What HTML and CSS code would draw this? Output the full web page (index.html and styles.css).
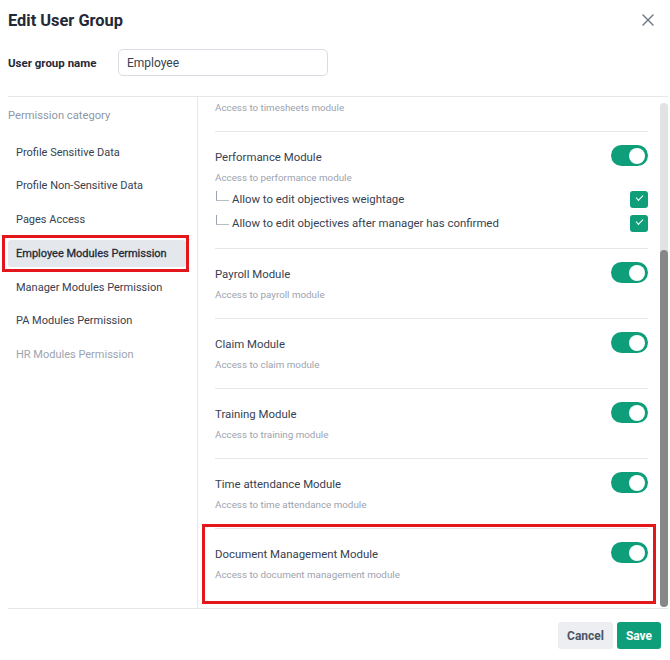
FILE: index.html
```html
<!DOCTYPE html>
<html lang="en">
<head>
  <meta charset="UTF-8">
  <meta name="viewport" content="width=device-width, initial-scale=1.0">
  <title>Edit User Group</title>
  <link rel="stylesheet" href="styles.css">
</head>
<body>
  <div class="modal">
    <!-- header -->
    <div class="modal-header">
      <h2>Edit User Group</h2>
      <button class="close-btn" aria-label="Close">
        <svg width="12" height="12" viewBox="0 0 12 12"><path d="M1 1L11 11M11 1L1 11" stroke="currentColor" stroke-width="1.4" stroke-linecap="round"/></svg>
      </button>
    </div>

    <!-- group name -->
    <div class="name-row">
      <label for="groupName">User group name</label>
      <input id="groupName" type="text" value="Employee">
    </div>

    <!-- permissions -->
    <div class="perm">
      <aside class="perm-nav">
        <div class="perm-nav-title">Permission category</div>
        <ul>
          <li>Profile Sensitive Data</li>
          <li>Profile Non-Sensitive Data</li>
          <li>Pages Access</li>
          <li class="active">Employee Modules Permission</li>
          <li>Manager Modules Permission</li>
          <li>PA Modules Permission</li>
          <li class="disabled">HR Modules Permission</li>
        </ul>
      </aside>

      <div class="perm-body">
        <div class="perm-list" id="permList">
          <div class="perm-row">
            <div class="perm-text">
              <div class="perm-title">Leave Module</div>
              <div class="perm-desc">Access to leave module</div>
            </div>
            <label class="toggle"><input type="checkbox" checked><span></span></label>
          </div>
          <div class="perm-row">
            <div class="perm-text">
              <div class="perm-title">Calendar Module</div>
              <div class="perm-desc">Access to calendar module</div>
            </div>
            <label class="toggle"><input type="checkbox" checked><span></span></label>
          </div>
          <div class="perm-row">
            <div class="perm-text">
              <div class="perm-title">Timesheets Module</div>
              <div class="perm-desc">Access to timesheets module</div>
            </div>
            <label class="toggle"><input type="checkbox" checked><span></span></label>
          </div>
          <div class="perm-row has-subs">
            <div class="perm-main">
              <div class="perm-text">
                <div class="perm-title">Performance Module</div>
                <div class="perm-desc">Access to performance module</div>
              </div>
              <label class="toggle"><input type="checkbox" checked><span></span></label>
            </div>
            <ul class="sub-list">
              <li><span class="branch"></span>Allow to edit objectives weightage<label class="check"><input type="checkbox" checked><span></span></label></li>
              <li><span class="branch"></span>Allow to edit objectives after manager has confirmed<label class="check"><input type="checkbox" checked><span></span></label></li>
            </ul>
          </div>
          <div class="perm-row">
            <div class="perm-text">
              <div class="perm-title">Payroll Module</div>
              <div class="perm-desc">Access to payroll module</div>
            </div>
            <label class="toggle"><input type="checkbox" checked><span></span></label>
          </div>
          <div class="perm-row">
            <div class="perm-text">
              <div class="perm-title">Claim Module</div>
              <div class="perm-desc">Access to claim module</div>
            </div>
            <label class="toggle"><input type="checkbox" checked><span></span></label>
          </div>
          <div class="perm-row">
            <div class="perm-text">
              <div class="perm-title">Training Module</div>
              <div class="perm-desc">Access to training module</div>
            </div>
            <label class="toggle"><input type="checkbox" checked><span></span></label>
          </div>
          <div class="perm-row">
            <div class="perm-text">
              <div class="perm-title">Time attendance Module</div>
              <div class="perm-desc">Access to time attendance module</div>
            </div>
            <label class="toggle"><input type="checkbox" checked><span></span></label>
          </div>
          <div class="perm-row highlight">
            <div class="perm-text">
              <div class="perm-title">Document Management Module</div>
              <div class="perm-desc">Access to document management module</div>
            </div>
            <label class="toggle"><input type="checkbox" checked><span></span></label>
          </div>
        </div>
        <div class="scroll-track"><div class="scroll-thumb" id="scrollThumb"></div></div>
      </div>
    </div>

    <!-- footer -->
    <div class="modal-footer">
      <button class="btn btn-cancel">Cancel</button>
      <button class="btn btn-save">Save</button>
    </div>
  </div>

  <script>
    const list = document.getElementById("permList");
    const thumb = document.getElementById("scrollThumb");
    function syncThumb() {
      const track = thumb.parentElement.clientHeight;
      const ratio = list.clientHeight / list.scrollHeight;
      const h = Math.round(track * ratio);
      const maxScroll = list.scrollHeight - list.clientHeight;
      const top = maxScroll > 0 ? (track - h) * (list.scrollTop / maxScroll) : 0;
      thumb.style.height = h + "px";
      thumb.style.marginTop = top + "px";
    }
    list.scrollTop = list.scrollHeight;
    list.addEventListener("scroll", syncThumb);
    syncThumb();
  </script>
</body>
</html>
```

FILE: styles.css
```css
/* base */
body {
  margin: 0;
  font-family: Roboto, "Noto Sans", Arial, sans-serif;
  color: #374151;
  background: #fff;
}
ul {
  list-style: none;
  margin: 0;
  padding: 0;
}

.modal {
  padding: 0 2px 0 8px;
}

/* header */
.modal-header {
  display: flex;
  justify-content: space-between;
  align-items: center;
  height: 40px;
}
.modal-header h2 {
  margin: 0;
  font-size: 16.4px;
  font-weight: 700;
  color: #1f2937;
}
.close-btn {
  border: none;
  background: none;
  padding: 0;
  margin-right: 14px;
  width: 12px;
  height: 12px;
  color: #6b7280;
  cursor: pointer;
}
.close-btn svg {
  display: block;
}

/* group name */
.name-row {
  display: flex;
  align-items: center;
  margin-top: 9px;
}
.name-row label {
  width: 110px;
  font-size: 11.5px;
  font-weight: 700;
  color: #1f2937;
}
.name-row input {
  width: 210px;
  height: 27px;
  box-sizing: border-box;
  border: 1px solid #d9dde3;
  border-radius: 5px;
  padding: 0 8px;
  font-family: inherit;
  font-size: 12px;
  color: #374151;
  outline: none;
}

/* permission panel */
.perm {
  display: grid;
  grid-template-columns: 190px 1fr;
  margin-top: 20px;
  height: 513px;
  box-sizing: border-box;
  border-top: 1px solid #e5e7eb;
  border-bottom: 1px solid #e5e7eb;
}
.perm-nav {
  border-right: 1px solid #e5e7eb;
  padding-right: 11px;
}
.perm-nav-title {
  padding-top: 10px;
  line-height: 18px;
  font-size: 11.2px;
  color: #8d97a6;
}
.perm-nav ul {
  display: flex;
  flex-direction: column;
  gap: 6.8px;
  margin-top: 13.5px;
}
.perm-nav li {
  position: relative;
  height: 27px;
  line-height: 27px;
  padding-left: 8px;
  border-radius: 3px;
  font-size: 11px;
  color: #374151;
  cursor: pointer;
}
.perm-nav li.active {
  background: #e4e7eb;
  color: #1f2937;
  -webkit-text-stroke: 0.3px #1f2937;
}
.perm-nav li.active::after {
  content: "";
  position: absolute;
  left: -6px;
  right: -3px;
  top: -5px;
  bottom: -5px;
  border: 3px solid #e3161b;
}
.perm-nav li.disabled {
  color: #9ca3af;
}

.perm-body {
  display: flex;
  min-height: 0;
}
.perm-list {
  flex: 1;
  overflow-y: auto;
  scrollbar-width: none;
  padding: 35px 12px 10px 17px;
}
.perm-list::-webkit-scrollbar {
  display: none;
}

/* scrollbar */
.scroll-track {
  width: 8px;
  margin: 6px 0 1px;
  background: #e2e2e2;
  border-radius: 4px;
}
.scroll-thumb {
  background: #878787;
  border-radius: 4px;
}

/* module rows */
.perm-row {
  position: relative;
  display: flex;
  justify-content: space-between;
  align-items: flex-start;
  padding: 16px 0 15px;
  border-bottom: 1px solid #e5e7eb;
}
.perm-row:last-child {
  border-bottom: none;
}
.perm-row.has-subs {
  display: block;
  padding-bottom: 13px;
}
.perm-main {
  display: flex;
  justify-content: space-between;
  align-items: flex-start;
}
.perm-title {
  font-size: 11.4px;
  line-height: 18px;
  color: #374151;
}
.perm-desc {
  margin-top: 4px;
  font-size: 9.8px;
  line-height: 16px;
  color: #9ca3af;
}
.perm-row.highlight::after {
  content: "";
  position: absolute;
  left: -13px;
  right: -8px;
  top: -5px;
  bottom: -6px;
  border: 3px solid #e3161b;
}

/* toggle */
.toggle {
  position: relative;
  display: inline-block;
  width: 37px;
  height: 21px;
  margin-top: -3px;
}
.toggle input {
  opacity: 0;
  width: 0;
  height: 0;
}
.toggle span {
  position: absolute;
  inset: 0;
  background: #c9ced6;
  border-radius: 11px;
  cursor: pointer;
}
.toggle span::before {
  content: "";
  position: absolute;
  top: 2.5px;
  left: 3px;
  width: 16px;
  height: 16px;
  border-radius: 50%;
  background: #fff;
  transition: transform .2s;
}
.toggle input:checked + span {
  background: #0e9e7a;
}
.toggle input:checked + span::before {
  transform: translateX(15px);
}

/* sub permissions */
.sub-list {
  margin-top: 1px;
}
.sub-list li {
  display: flex;
  align-items: center;
  height: 24px;
  font-size: 11.4px;
  color: #374151;
}
.branch {
  width: 12px;
  height: 9px;
  margin: -7px 3px 0 1px;
  border-left: 1px solid #9ca3af;
  border-bottom: 1px solid #b8bec8;
}
.check {
  position: relative;
  margin-left: auto;
  width: 18px;
  height: 17px;
}
.check input {
  opacity: 0;
  width: 0;
  height: 0;
}
.check span {
  position: absolute;
  inset: 0;
  border-radius: 3px;
  background: #0e9e7a;
}
.check span::after {
  content: "";
  position: absolute;
  left: 6px;
  top: 4px;
  width: 6px;
  height: 3px;
  border-left: 1px solid #fff;
  border-bottom: 1px solid #fff;
  transform: rotate(-45deg);
}

/* footer */
.modal-footer {
  display: flex;
  justify-content: flex-end;
  gap: 4px;
  margin-top: 13px;
  padding-right: 7px;
}
.btn {
  height: 27px;
  border: none;
  border-radius: 3px;
  font-family: inherit;
  font-size: 12px;
  font-weight: 700;
  cursor: pointer;
}
.btn-cancel {
  width: 55px;
  background: #eceef2;
  color: #4b5563;
}
.btn-save {
  width: 44px;
  background: #0e9e7a;
  color: #fff;
}
```
